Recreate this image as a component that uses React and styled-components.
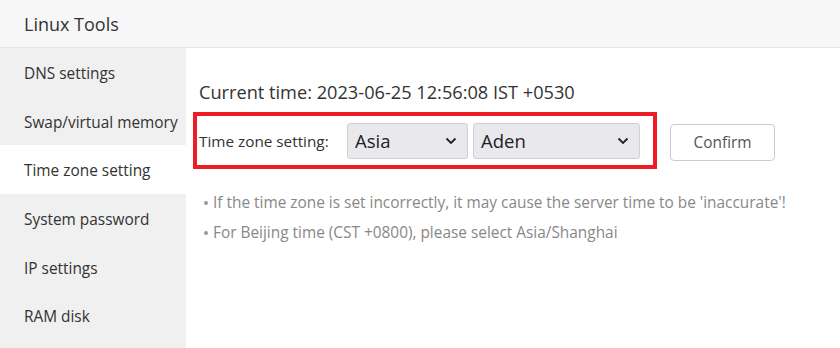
import React from "react";
import styled, { createGlobalStyle } from "styled-components";

const Global = createGlobalStyle`
  html, body { margin: 0; padding: 0; background: #fff; }
  body { font-family: "Open Sans", "Noto Sans", sans-serif; color: #333; }
  * { box-sizing: border-box; }
`;

const Page = styled.div`
  width: 840px;
  height: 348px;
  display: flex;
  flex-direction: column;
  overflow: hidden;
`;

const Header = styled.div`
  height: 48px;
  flex: none;
  background: #f7f7f7;
  border-bottom: 1px solid #e6e6e6;
  display: flex;
  align-items: center;
  padding-left: 24px;
  font-size: 18px;
  color: #333;
`;

const Body = styled.div`
  flex: 1;
  display: flex;
`;

const Sidebar = styled.div`
  width: 186px;
  flex: none;
  background: #f0f0f0;
  display: flex;
  flex-direction: column;
`;

const NavItem = styled.div`
  height: 48.7px;
  display: flex;
  align-items: center;
  padding: 2px 0 0 24px;
  font-size: 15.4px;
  color: #333;
  background: ${(p) => (p.$active ? "#fff" : "transparent")};
`;

const Main = styled.div`
  flex: 1;
  padding: 29px 0 0 7px;
  display: flex;
  flex-direction: column;
`;

const CurrentTime = styled.div`
  font-size: 18.2px;
  color: #333;
  padding-left: 6px;
  height: 30px;
  line-height: 30px;
`;

const SettingRow = styled.div`
  display: flex;
  align-items: center;
  margin-top: 5px;
`;

const Highlight = styled.div`
  border: 4px solid #ee1c25;
  height: 57px;
  width: 464px;
  display: flex;
  align-items: center;
  padding-left: 2px;
`;

const Label = styled.span`
  font-size: 15.3px;
  color: #333;
  width: 148px;
`;

const SelectBox = styled.div`
  width: ${(p) => p.$w}px;
  height: 36px;
  background: #e9e9ed;
  border: 1px solid #cfcfd4;
  border-radius: 3px;
  display: flex;
  align-items: center;
  justify-content: space-between;
  padding: 0 10px 0 7px;
  font-size: 18.5px;
  color: #222;
  margin-right: 5px;
`;

const Chevron = () => (
  <svg width="12" height="8" viewBox="0 0 12 8">
    <path d="M1.5 1.5 L6 6 L10.5 1.5" fill="none" stroke="#222" strokeWidth="1.8" />
  </svg>
);

const Button = styled.button`
  margin: 3px 0 0 13px;
  width: 105px;
  height: 37px;
  border: 1px solid #ccc;
  border-radius: 4px;
  background: #fff;
  font-family: inherit;
  font-size: 15.4px;
  color: #555;
`;

const Notes = styled.ul`
  list-style: none;
  margin: 19px 0 0 0;
  padding: 0 0 0 11px;
`;

const Note = styled.li`
  font-size: 15.4px;
  color: #888;
  height: 30px;
  line-height: 30px;
  display: flex;
  align-items: center;
  &::before {
    content: "";
    width: 4px;
    height: 4px;
    border-radius: 50%;
    background: #999;
    margin-right: 5px;
  }
`;

const navItems = [
  "DNS settings",
  "Swap/virtual memory",
  "Time zone setting",
  "System password",
  "IP settings",
  "RAM disk",
];

export default function App() {
  return (
    <>
      <Global />
      <Page>
        <Header>Linux Tools</Header>
        <Body>
          <Sidebar>
            {navItems.map((n) => (
              <NavItem key={n} $active={n === "Time zone setting"}>
                {n}
              </NavItem>
            ))}
          </Sidebar>
          <Main>
            <CurrentTime>Current time: 2023-06-25 12:56:08 IST +0530</CurrentTime>
            <SettingRow>
              <Highlight>
                <Label>Time zone setting:</Label>
                <SelectBox $w={121}>
                  <span>Asia</span>
                  <Chevron />
                </SelectBox>
                <SelectBox $w={167}>
                  <span>Aden</span>
                  <Chevron />
                </SelectBox>
              </Highlight>
              <Button>Confirm</Button>
            </SettingRow>
            <Notes>
              <Note>If the time zone is set incorrectly, it may cause the server time to be 'inaccurate'!</Note>
              <Note>For Beijing time (CST +0800), please select Asia/Shanghai</Note>
            </Notes>
          </Main>
        </Body>
      </Page>
    </>
  );
}
